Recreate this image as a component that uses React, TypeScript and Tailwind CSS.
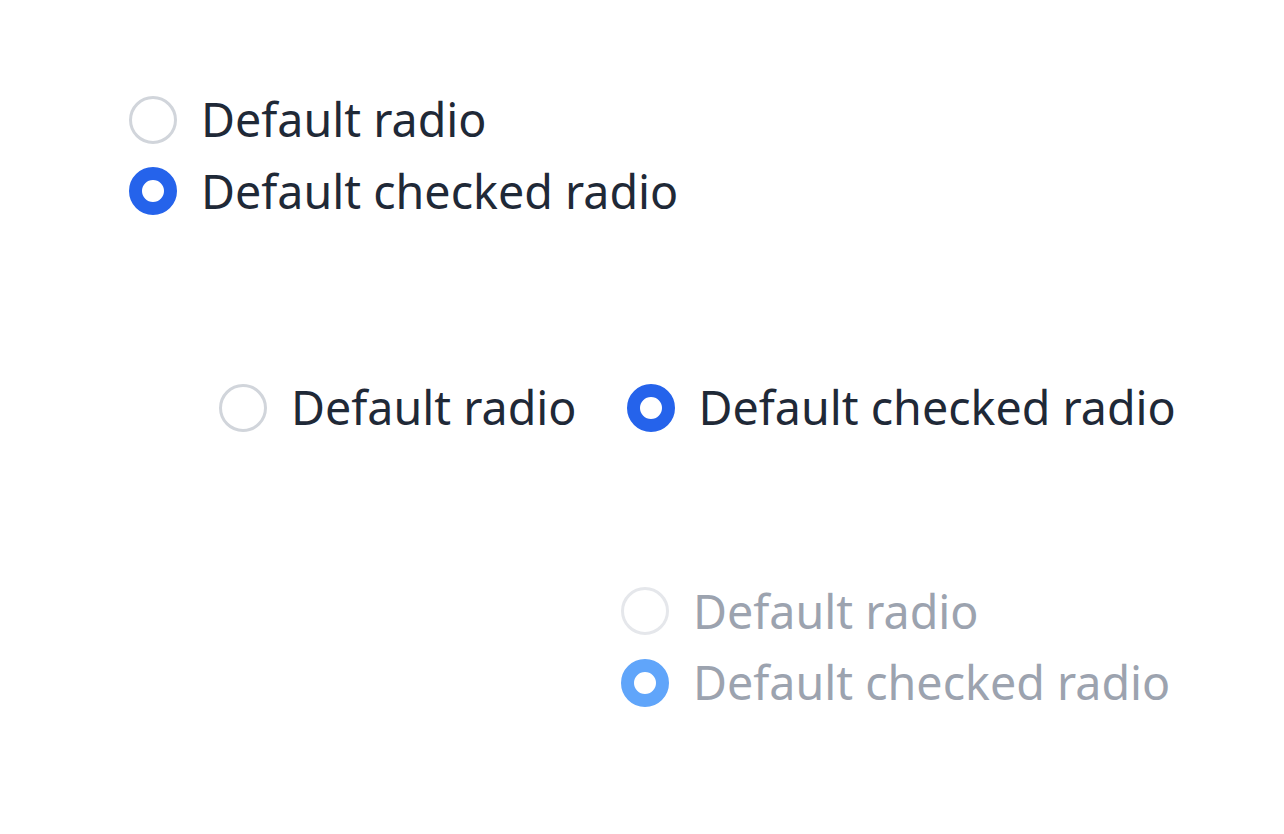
const font = { fontFamily: '"Noto Sans", "Open Sans", sans-serif' }

function Radio({ checked, disabled, label }: { checked?: boolean; disabled?: boolean; label: string }) {
  const ring = checked
    ? disabled
      ? 'border-[13px] border-[#60a5fa]'
      : 'border-[13px] border-[#2563eb]'
    : disabled
      ? 'border-[3px] border-[#e5e7eb]'
      : 'border-[3px] border-[#d1d5db]'
  return (
    <label className="flex items-center h-[71.5px] gap-[24px]">
      <span className={`block w-[48px] h-[48px] rounded-full bg-white shrink-0 ${ring}`} />
      <span className={`text-[46.6px] leading-none ${disabled ? 'text-[#9ca3af]' : 'text-[#1f2937]'}`}>{label}</span>
    </label>
  )
}

export default function App() {
  return (
    <div className="w-[1284px] h-[834px] bg-white overflow-hidden" style={font}>
      <div className="pt-[84px] pl-[129px] flex flex-col">
        <Radio label="Default radio" />
        <Radio label="Default checked radio" checked />
      </div>

      <div className="mt-[145px] pl-[219px] flex gap-[50px]">
        <Radio label="Default radio" />
        <Radio label="Default checked radio" checked />
      </div>

      <div className="mt-[132px] pl-[621px] flex flex-col">
        <Radio label="Default radio" disabled />
        <Radio label="Default checked radio" checked disabled />
      </div>
    </div>
  )
}
